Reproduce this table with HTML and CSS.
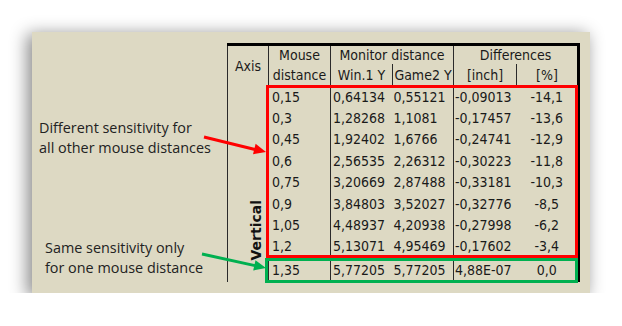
FILE: index.html
```html
<!DOCTYPE html>
<html>
<head>
    <title>Mouse sensitivity</title>
    <link rel="stylesheet" href="styles.css">
</head>
<body>
    <div class="sheet">
        <!-- left notes -->
        <div class="notes">
            <p class="note note-top">Different sensitivity for<br>all other mouse distances</p>
            <p class="note note-bottom">Same sensitivity only<br>for one mouse distance</p>
        </div>

        <!-- table with highlight boxes -->
        <div class="table-wrap">
            <table class="data">
                <colgroup>
                    <col style="width:41px">
                    <col style="width:62px">
                    <col style="width:62px">
                    <col style="width:61px">
                    <col style="width:63px">
                    <col style="width:62px">
                </colgroup>
                <thead>
                    <tr class="head-1">
                        <th rowspan="2" class="axis">Axis</th>
                        <th class="grp">Mouse</th>
                        <th colspan="2" class="grp">Monitor distance</th>
                        <th colspan="2" class="grp last">Differences</th>
                    </tr>
                    <tr class="head-2">
                        <th class="grp">distance</th>
                        <th class="grp">Win.1 Y</th>
                        <th class="sub">Game2 Y</th>
                        <th class="grp">[inch]</th>
                        <th class="sub last">[%]</th>
                    </tr>
                </thead>
                <tbody>
                    <tr>
                        <td rowspan="9" class="axis"><span class="vert">Vertical</span></td>
                        <td class="mouse">0,15</td><td class="win">0,64134</td><td class="game">0,55121</td><td class="inch">-0,09013</td><td class="pct">-14,1</td>
                    </tr>
                    <tr><td class="mouse">0,3</td><td class="win">1,28268</td><td class="game">1,1081</td><td class="inch">-0,17457</td><td class="pct">-13,6</td></tr>
                    <tr><td class="mouse">0,45</td><td class="win">1,92402</td><td class="game">1,6766</td><td class="inch">-0,24741</td><td class="pct">-12,9</td></tr>
                    <tr><td class="mouse">0,6</td><td class="win">2,56535</td><td class="game">2,26312</td><td class="inch">-0,30223</td><td class="pct">-11,8</td></tr>
                    <tr><td class="mouse">0,75</td><td class="win">3,20669</td><td class="game">2,87488</td><td class="inch">-0,33181</td><td class="pct">-10,3</td></tr>
                    <tr><td class="mouse">0,9</td><td class="win">3,84803</td><td class="game">3,52027</td><td class="inch">-0,32776</td><td class="pct">-8,5</td></tr>
                    <tr><td class="mouse">1,05</td><td class="win">4,48937</td><td class="game">4,20938</td><td class="inch">-0,27998</td><td class="pct">-6,2</td></tr>
                    <tr><td class="mouse">1,2</td><td class="win">5,13071</td><td class="game">4,95469</td><td class="inch">-0,17602</td><td class="pct">-3,4</td></tr>
                    <tr class="same"><td class="mouse">1,35</td><td class="win">5,77205</td><td class="game">5,77205</td><td class="inch">4,88E-07</td><td class="pct">0,0</td></tr>
                </tbody>
            </table>
            <div class="mark mark-red"></div>
            <div class="mark mark-green"></div>
        </div>

        <!-- arrows from notes to the table -->
        <svg class="arrows" width="558" height="261" viewBox="0 0 558 261">
            <line x1="172" y1="105" x2="223" y2="117.5" stroke="#ff0000" stroke-width="3"/>
            <polygon points="234,120 221,122.3 223.6,111.8" fill="#ff0000"/>
            <line x1="170" y1="222" x2="223" y2="233.6" stroke="#00b050" stroke-width="3"/>
            <polygon points="234,236 221.2,238.5 223.5,228.3" fill="#00b050"/>
        </svg>
    </div>
</body>
</html>
```

FILE: styles.css
```css
body {
    margin: 0;
    background: #ffffff;
    font-family: 'DejaVu Sans Condensed', 'DejaVu Sans', sans-serif;
    color: #1a1a1a;
}

.sheet {
    position: relative;
    display: flex;
    width: 558px;
    height: 261px;
    margin: 32px 0 0 32px;
    padding-top: 11px;
    box-sizing: border-box;
    background-color: #ddd9c3;
    box-shadow: -4px 3px 16px 1px rgba(0, 0, 0, 0.45);
}

/* notes on the left */
.notes {
    width: 195px;
    display: flex;
    flex-direction: column;
}

.note {
    margin: 0;
    font-family: 'Open Sans', sans-serif;
    font-size: 14.4px;
    line-height: 20px;
    color: #222;
}

.note-top {
    margin-top: 75px;
    padding-left: 7px;
}

.note-bottom {
    margin-top: 80px;
    padding-left: 13px;
}

/* table */
.table-wrap {
    position: relative;
    width: 351px;
}

.data {
    width: 351px;
    table-layout: fixed;
    border-collapse: collapse;
    font-size: 14px;
}

.data th {
    font-weight: normal;
    text-align: center;
    padding: 0;
    white-space: nowrap;
}

.head-1 th {
    border-top: 3px solid #000;
    height: 18px;
    line-height: 18px;
}

.head-2 th {
    height: 22px;
    line-height: 20px;
}

.data th.axis,
.data th.grp,
.data th.sub {
    border-left: 1px solid #2a2a2a;
}

.data th.last {
    border-right: 3px solid #000;
}

.data td {
    padding: 0;
    height: 21.4px;
    line-height: 20px;
    white-space: nowrap;
}

.data tr.same td {
    height: 25px;
}

.data td.axis {
    border-left: 1px solid #2a2a2a;
    vertical-align: bottom;
    text-align: right;
    padding: 0 4px 17px 0;
}

.vert {
    display: inline-block;
    writing-mode: vertical-rl;
    transform: rotate(180deg);
    font-family: 'DejaVu Sans', sans-serif;
    font-weight: bold;
    font-size: 14px;
    line-height: 15px;
    color: #111;
}

.data td.mouse {
    padding-left: 3px;
    border-left: 1px solid #2a2a2a;
}

.data td.win {
    padding-left: 2px;
    border-left: 1px solid #2a2a2a;
}

.data td.game {
    padding-left: 1px;
}

.data td.inch {
    padding-left: 1px;
    border-left: 1px solid #2a2a2a;
}

.data td.pct {
    text-align: center;
    border-right: 3px solid #000;
}

/* highlight boxes */
.mark {
    position: absolute;
    box-sizing: border-box;
    border: 3px solid;
}

.mark-red {
    left: 39px;
    top: 42px;
    width: 312px;
    height: 173px;
    border-color: #ff0000;
}

.mark-green {
    left: 38px;
    top: 215px;
    width: 313px;
    height: 25px;
    border-color: #00b050;
}

.arrows {
    position: absolute;
    left: 0;
    top: 0;
}
```
